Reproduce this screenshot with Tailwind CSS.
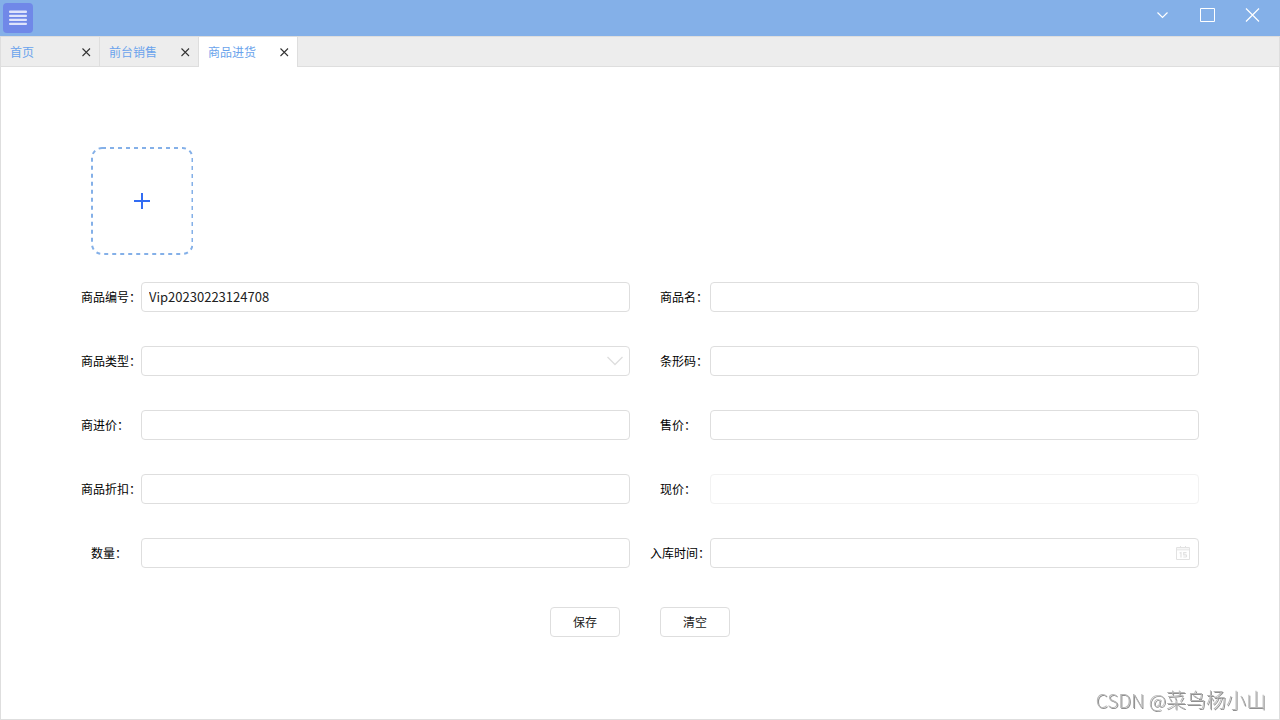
<!DOCTYPE html>
<html lang="zh-CN">
<head>
<meta charset="utf-8">
<meta name="viewport" content="width=device-width, initial-scale=1">
<title>商品进货</title>
<script src="https://cdn.jsdelivr.net/npm/@tailwindcss/browser@4"></script>
</head>
<body class="flex min-h-screen flex-col bg-white font-['Noto_Sans_CJK_SC',sans-serif] text-xs text-black">
  <header class="flex h-9 items-center justify-between bg-[#84b0e8] pr-[19px] pl-[3px]">
    <button type="button" aria-label="菜单" class="flex size-[30px] items-center justify-center rounded bg-[#7088e8]">
      <svg class="h-4 w-5" viewBox="0 0 20 16" fill="#dfe4fb"><rect x="1" y="0.500" width="18" height="2.400" rx="1"/><rect x="1" y="4.700" width="18" height="2.400" rx="1"/><rect x="1" y="8.700" width="18" height="2.400" rx="1"/><rect x="1" y="12.700" width="18" height="2.400" rx="1"/></svg>
    </button>
    <div class="flex h-full items-start gap-[29px] pt-[7px]">
      <button type="button" aria-label="最小化" class="size-4"><svg class="size-4" viewBox="0 0 16 16" fill="none" stroke="#fff" stroke-width="1.2"><path d="M2.500 5.500 7.500 10.500 12.500 5.500"/></svg></button>
      <button type="button" aria-label="最大化" class="size-4"><svg class="size-4" viewBox="0 0 16 16" fill="none" stroke="#fff"><path d="M.5 1.500h14v13H.5z"/></svg></button>
      <button type="button" aria-label="关闭" class="size-4"><svg class="size-4" viewBox="0 0 16 16" fill="none" stroke="#fff" stroke-width="1.2"><path d="M1 1.500 14 14.500M14 1.500 1 14.500"/></svg></button>
    </div>
  </header>

  <div class="flex flex-1 flex-col border border-[#dedede]">
    <nav class="flex h-[30px] bg-[#ededed]">
      <div class="flex w-[99px] items-center justify-between border-r border-b border-[#dedede] pt-px pr-2 pl-[9px]">
        <a href="#" class="text-[#6aa3ec]">首页</a>
        <button type="button" aria-label="关闭首页"><svg class="size-[9px]" viewBox="0 0 9 9" stroke="#333" fill="none" stroke-width="1.100"><path d="M.5.5l7.500 7.500M8 .5l-7.500 7.500"/></svg></button>
      </div>
      <div class="flex w-[99px] items-center justify-between border-r border-b border-[#dedede] pt-px pr-2 pl-[9px]">
        <a href="#" class="text-[#6aa3ec]">前台销售</a>
        <button type="button" aria-label="关闭前台销售"><svg class="size-[9px]" viewBox="0 0 9 9" stroke="#333" fill="none" stroke-width="1.100"><path d="M.5.5l7.500 7.500M8 .5l-7.500 7.500"/></svg></button>
      </div>
      <div class="flex w-[99px] items-center justify-between border-r border-[#dedede] bg-white pr-2 pl-[9px]">
        <a href="#" aria-current="page" class="text-[#6aa3ec]">商品进货</a>
        <button type="button" aria-label="关闭商品进货"><svg class="size-[9px]" viewBox="0 0 9 9" stroke="#333" fill="none" stroke-width="1.100"><path d="M.5.5l7.500 7.500M8 .5l-7.500 7.500"/></svg></button>
      </div>
      <div class="flex-1 border-b border-[#dedede]"></div>
    </nav>

    <form class="px-20 pt-20">
      <button type="button" aria-label="添加图片" class="ml-[10px] block">
        <svg class="h-[108px] w-[102px]" viewBox="0 0 102 108" fill="none" stroke-width="2">
          <rect x="1" y="1" width="100.500" height="106" rx="10" stroke="#84b0e8" stroke-dasharray="4 4"/>
          <path d="M51 46v16M43 54h16" stroke="#326cf3"/>
        </svg>
      </button>

      <div class="mt-[27px] grid grid-cols-[60px_1fr_80px_1fr] items-center gap-y-[34px] [font-feature-settings:'halt']">
        <label for="code">商品编号：</label>
        <input id="code" type="text" value="Vip20230223124708" class="h-[30px] w-full rounded border border-[#dedede] px-[7px] pb-[2px] text-[13px] text-[#212121]">
        <label for="name" class="pl-[30px]">商品名：</label>
        <input id="name" type="text" class="h-[30px] w-full rounded border border-[#dedede] px-[7px]">

        <label for="type">商品类型：</label>
        <div class="relative">
          <select id="type" class="block h-[30px] w-full appearance-none rounded border border-[#dedede] px-[7px]"><option></option></select>
          <svg class="pointer-events-none absolute top-[10px] right-[7px] h-[10px] w-4" viewBox="0 0 16 10" fill="none" stroke="#dedede" stroke-width="1.300"><path d="M.5 1 8 8.500 15.500 1"/></svg>
        </div>
        <label for="barcode" class="pl-[30px]">条形码：</label>
        <input id="barcode" type="text" class="h-[30px] w-full rounded border border-[#dedede] px-[7px]">

        <label for="cost">商进价：</label>
        <input id="cost" type="text" class="h-[30px] w-full rounded border border-[#dedede] px-[7px]">
        <label for="price" class="pl-[30px]">售价：</label>
        <input id="price" type="text" class="h-[30px] w-full rounded border border-[#dedede] px-[7px]">

        <label for="discount">商品折扣：</label>
        <input id="discount" type="text" class="h-[30px] w-full rounded border border-[#dedede] px-[7px]">
        <label for="current" class="pl-[30px]">现价：</label>
        <input id="current" type="text" disabled class="h-[30px] w-full rounded border border-[#f2f2f2] px-[7px]">

        <label for="quantity" class="pl-[10px]">数量：</label>
        <input id="quantity" type="text" class="h-[30px] w-full rounded border border-[#dedede] px-[7px]">
        <label for="date" class="pl-5">入库时间：</label>
        <div class="relative">
          <input id="date" type="text" class="block h-[30px] w-full rounded border border-[#dedede] px-[7px]">
          <svg class="pointer-events-none absolute top-2 right-[9px] size-[14px]" viewBox="0 0 14 14" fill="none" stroke="#e2e2e2"><path d="M.5 1.500h13v12H.5z"/><path d="M1 3.500h12" stroke-width="2" stroke="#ececec"/><path d="M4.500 0v2M9.500 0v2"/><path d="M3.500 7 5 6.500v5M10.500 6.700H7.700v2.100h2q.8 0 .8.800v.6q0 .8-.8.800H7.300" stroke-width="1.200"/></svg>
        </div>
      </div>

      <div class="mt-[39px] flex justify-center gap-10">
        <button type="submit" class="h-[30px] w-[70px] rounded border border-[#dedede] text-[#212121]">保存</button>
        <button type="reset" class="h-[30px] w-[70px] rounded border border-[#dedede] text-[#212121]">清空</button>
      </div>
    </form>
  </div>
  <p class="fixed right-[14px] bottom-[6px] text-xl font-light text-[#b8b8b8] [text-shadow:1px_1px_0_#8f8f8f]"><span class="text-[19px]">CSDN @</span>菜鸟杨小山</p>
</body>
</html>
